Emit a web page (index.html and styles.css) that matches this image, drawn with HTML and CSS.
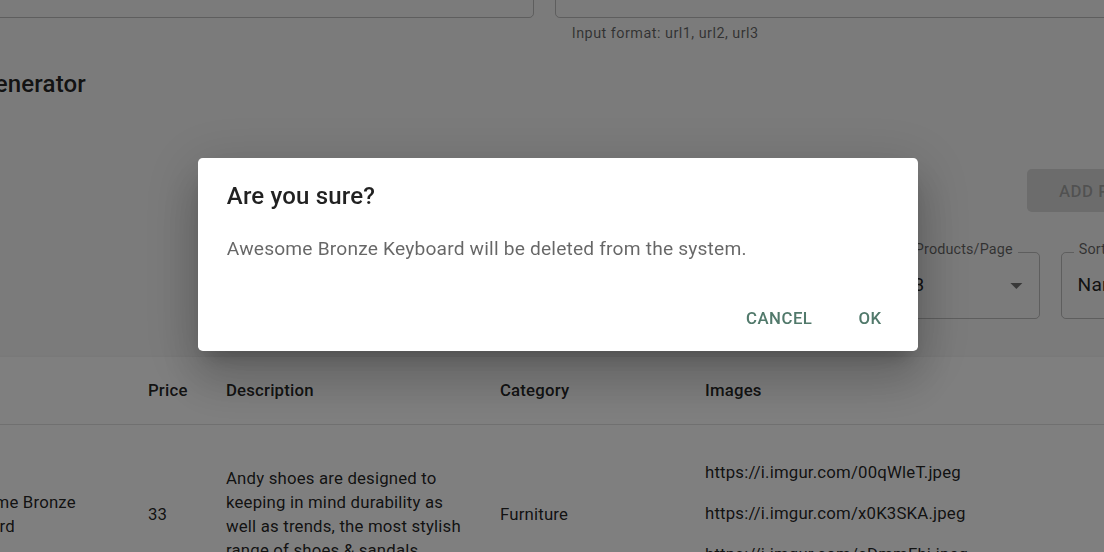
FILE: index.html
```html
<!DOCTYPE html>
<html lang="en">
<head>
<meta charset="utf-8">
<title>Product Generator</title>
<link rel="stylesheet" href="styles.css">
</head>
<body>
<div class="page">
  <div class="fields">
    <div class="field field-a"></div>
    <div class="field-col">
      <div class="field field-b"></div>
      <p class="helper">Input format: url1, url2, url3</p>
    </div>
  </div>

  <h2 class="section-title">Product Generator</h2>

  <div class="toolbar">
    <button class="btn-add" disabled>Add Product</button>
  </div>

  <div class="filters">
    <div class="select sel-pp">
      <span class="select-label">Products/Page</span>
      <span class="select-value">3</span>
      <svg class="select-arrow" viewBox="0 0 24 24"><path d="M7 10l5 5 5-5z"/></svg>
    </div>
    <div class="select sel-sort">
      <span class="select-label">Sort</span>
      <span class="select-value">Name</span>
    </div>
  </div>

  <div class="table-paper">
    <table class="products">
      <colgroup>
        <col class="c-name"><col class="c-price"><col class="c-desc"><col class="c-cat"><col class="c-img">
      </colgroup>
      <thead>
        <tr><th>Name</th><th>Price</th><th>Description</th><th>Category</th><th>Images</th></tr>
      </thead>
      <tbody>
        <tr>
          <td>Awesome Bronze Keyboard</td>
          <td>33</td>
          <td class="desc">Andy shoes are designed to keeping in mind durability as well as trends, the most stylish range of shoes &amp; sandals</td>
          <td>Furniture</td>
          <td>
            <ul class="img-list">
              <li>https://i.imgur.com/00qWleT.jpeg</li>
              <li>https://i.imgur.com/x0K3SKA.jpeg</li>
              <li>https://i.imgur.com/cDmmFhi.jpeg</li>
            </ul>
          </td>
        </tr>
      </tbody>
    </table>
  </div>
</div>

<div class="backdrop">
  <div class="dialog" role="dialog">
    <h2 class="dialog-title">Are you sure?</h2>
    <div class="dialog-content">
      <p>Awesome Bronze Keyboard will be deleted from the system.</p>
    </div>
    <div class="dialog-actions">
      <button class="btn-text">Cancel</button>
      <button class="btn-text">OK</button>
    </div>
  </div>
</div>
</body>
</html>
```

FILE: styles.css
```css
* { box-sizing: border-box; }

html, body {
  margin: 0;
  height: 552px;
  overflow: hidden;
}

body {
  background: #f6f6f6;
  font-family: Roboto, "Noto Sans", "Liberation Sans", sans-serif;
  color: rgba(0, 0, 0, 0.87);
}

.page {
  width: 1104px;
}

/* top inputs */
.fields {
  display: flex;
  gap: 21px;
  margin-top: -49.2px;
  margin-left: -300px;
}

.field {
  height: 67.2px;
  border: 1.2px solid rgba(0, 0, 0, 0.23);
  border-radius: 4.8px;
}

.field-a { flex: none; width: 834px; }
.field-col { flex: none; width: 700px; }

.helper {
  margin: 3.6px 16.8px 0;
  font-size: 14.4px;
  line-height: 1.66;
  letter-spacing: 0.03333em;
  color: rgba(0, 0, 0, 0.6);
}

/* section title */
.section-title {
  margin: 19.3px 0 0 -300px;
  width: 386px;
  text-align: right;
  font-size: 24px;
  line-height: 38.4px;
  font-weight: 500;
  letter-spacing: 0.0075em;
  white-space: nowrap;
}

/* toolbar */
.toolbar {
  display: flex;
  margin-top: 65.8px;
  padding-left: 1027px;
}

.btn-add {
  flex: none;
  height: 43px;
  padding: 0 32px;
  border: none;
  border-radius: 4.8px;
  background: rgba(0, 0, 0, 0.12);
  color: rgba(0, 0, 0, 0.26);
  font-family: inherit;
  font-size: 16.8px;
  font-weight: 500;
  letter-spacing: 0.02857em;
  text-transform: uppercase;
  white-space: nowrap;
}

/* filters */
.filters {
  display: flex;
  gap: 21px;
  margin-top: 39.7px;
  padding-left: 897px;
}

.select {
  position: relative;
  flex: none;
  height: 67.2px;
  border: 1.2px solid rgba(0, 0, 0, 0.23);
  border-radius: 4.8px;
  display: flex;
  align-items: center;
}

.sel-pp { width: 143px; }
.sel-sort { width: 220px; }

.select-label {
  position: absolute;
  top: -10px;
  left: 12px;
  padding: 0 4.8px;
  background: #f6f6f6;
  font-size: 14.4px;
  line-height: 1;
  letter-spacing: 0.00938em;
  color: rgba(0, 0, 0, 0.6);
  white-space: nowrap;
}

.select-value {
  padding-left: 15.6px;
  font-size: 19.2px;
  line-height: 1.4375;
  letter-spacing: 0.00938em;
  color: rgba(0, 0, 0, 0.87);
}

.select-arrow {
  position: absolute;
  right: 8.4px;
  top: 50%;
  width: 28.8px;
  height: 28.8px;
  margin-top: -14.4px;
  fill: rgba(0, 0, 0, 0.54);
}

/* table */
.table-paper {
  margin-top: 38px;
  margin-left: -76px;
  width: 1400px;
  background: #fff;
  box-shadow: 0 2.4px 1.2px -1.2px rgba(0,0,0,0.2), 0 1.2px 1.2px 0 rgba(0,0,0,0.14), 0 1.2px 3.6px 0 rgba(0,0,0,0.12);
}

.products {
  border-collapse: collapse;
  table-layout: fixed;
  width: 1261.8px;
  font-size: 16.8px;
  letter-spacing: 0.01071em;
}

.c-name { width: 204.8px; }
.c-price { width: 78px; }
.c-desc { width: 274px; }
.c-cat { width: 205px; }
.c-img { width: 500px; }

.products th {
  text-align: left;
  font-weight: 500;
  padding: 19.2px;
  line-height: 28.8px;
  border-bottom: 1.2px solid #e0e0e0;
  color: rgba(0, 0, 0, 0.87);
  white-space: nowrap;
}

.products td {
  padding: 19.2px;
  line-height: 24px;
  vertical-align: middle;
  color: rgba(0, 0, 0, 0.87);
}

.products td.desc { padding-right: 12px; }

.img-list {
  list-style: none;
  margin: 0;
  padding: 7.9px 0;
}

.img-list li {
  line-height: 41px;
  white-space: nowrap;
}

/* dialog */
.backdrop {
  position: fixed;
  inset: 0;
  background: rgba(0, 0, 0, 0.5);
  display: flex;
  align-items: flex-start;
  justify-content: flex-start;
  padding: 158px 0 0 198px;
}

.dialog {
  width: 720px;
  background: #fff;
  border-radius: 4.8px;
  box-shadow: 0 13.2px 18px -8.4px rgba(0,0,0,0.2), 0 28.8px 45.6px 3.6px rgba(0,0,0,0.14), 0 10.8px 55.2px 9.6px rgba(0,0,0,0.12);
}

.dialog-title {
  margin: 0;
  padding: 19.2px 28.8px;
  font-size: 24px;
  line-height: 38.4px;
  font-weight: 500;
  letter-spacing: 0.0075em;
  color: rgba(0, 0, 0, 0.87);
}

.dialog-content {
  padding: 0 28.8px 24px;
}

.dialog-content p {
  margin: 0;
  font-size: 19.2px;
  line-height: 28.8px;
  letter-spacing: 0.00938em;
  color: rgba(0, 0, 0, 0.6);
}

.dialog-actions {
  display: flex;
  justify-content: flex-end;
  gap: 9.6px;
  padding: 9.6px;
}

.btn-text {
  min-width: 76.8px;
  padding: 7.2px 9.6px;
  border: none;
  border-radius: 4.8px;
  background: none;
  font-family: inherit;
  font-size: 16.8px;
  line-height: 29.4px;
  font-weight: 500;
  letter-spacing: 0.02857em;
  text-transform: uppercase;
  color: #51796b;
}
```
